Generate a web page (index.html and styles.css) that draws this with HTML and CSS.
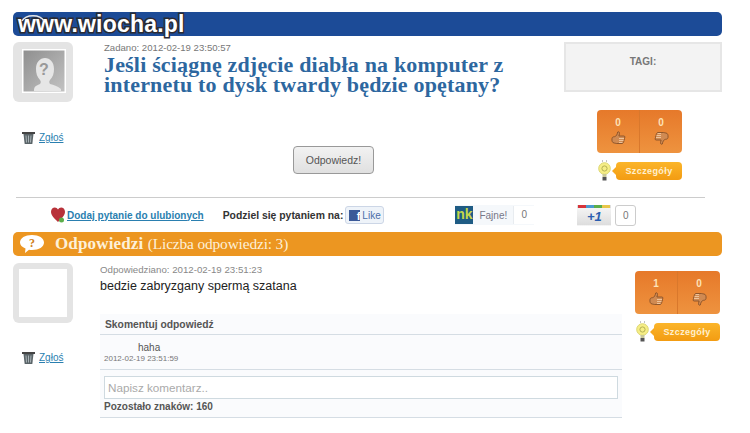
FILE: index.html
```html
<!DOCTYPE html>
<html>
<head>
  <title>Pytanie</title>
  <link rel="stylesheet" href="styles.css">
</head>
<body>
  <svg class="sprites" width="0" height="0">
    <symbol id="trash" viewBox="0 0 13 13">
      <path d="M0 1h13v2H0z" fill="#444"/>
      <path d="M1.500 3h10l-1.200 10H2.700z" fill="#5a6468"/>
      <path d="M4 4.500l.5 7M6.500 4.500v7M9 4.500l-.5 7" stroke="#aab4b8" fill="none"/>
    </symbol>
    <symbol id="up" viewBox="0 0 15 14">
      <path d="M1 7.500c0-1 1-1.800 2.500-1.800 1.800-.4 2.700-2 3.200-4.700.8-.6 2 0 1.800 1.500l-.6 2.500h5c1.400 0 1.400 2 .2 2.200.8.500.6 1.800-.3 2 .5.600.2 1.600-.6 1.800.2.800-.3 1.500-1.200 1.500H5.500c-1 0-1.500-.5-2.300-.5C1.500 12 .6 10 1 7.500z" fill="#d08a52" stroke="#7c4a26" stroke-width=".8"/>
      <path d="M8 7.500h5M8 9.500h4.500M8 11.500h3.500" stroke="#f5d3ae" stroke-width=".8"/>
    </symbol>
    <symbol id="down" viewBox="0 0 15 14">
      <path d="M14 6.500c0 1-1 1.800-2.500 1.800-1.800.4-2.700 2-3.200 4.700-.8.600-2 0-1.800-1.500l.6-2.500h-5c-1.400 0-1.400-2-.2-2.200-.8-.5-.6-1.800.3-2-.5-.6-.2-1.600.6-1.800-.2-.8.3-1.500 1.200-1.500h5.500c1 0 1.500.5 2.300.5 1.700 0 2.600 2 2.200 4.500z" fill="#d08a52" stroke="#7c4a26" stroke-width=".8"/>
      <path d="M7 6.500H2M7 4.500H2.500M7 2.500H3.500" stroke="#f5d3ae" stroke-width=".8"/>
    </symbol>
    <symbol id="bulb" viewBox="0 0 13 21">
      <path d="M4 1h1M8 1h1" stroke="#888"/>
      <circle cx="6.500" cy="8.500" r="5.800" fill="#f6ee86" stroke="#dcd670"/>
      <circle cx="6.500" cy="8.500" r="2.600" fill="none" stroke="#b5b255"/>
      <path d="M4.500 14h4v3h-4z" fill="#c9c89a"/>
      <path d="M4.500 17h4v3.500h-4z" fill="#555"/>
    </symbol>
  </svg>

  <div class="page">
    <svg class="logo-arc" viewBox="0 0 26 10"><path d="M2 9C6 2 20 2 24 9" fill="none" stroke="#e8e8e8" stroke-width="1.500"/></svg>
    <div class="watermark">www.wiocha.pl</div>
    <div class="topbar"></div>

    <div class="question">
      <div class="side">
        <div class="avatar">
          <svg class="photo" viewBox="0 0 44 44">
            <defs>
              <linearGradient id="ph" x1="0" y1="0" x2="1" y2="1">
                <stop offset="0" stop-color="#8d8d8d"/>
                <stop offset="1" stop-color="#c4c4c4"/>
              </linearGradient>
            </defs>
            <rect width="44" height="44" fill="url(#ph)" stroke="#fff" stroke-width="3"/>
            <path d="M12 42c0-4 1-5 6-7 1-1 1-3 0-4-3-3-4-7-4-11 0-7 4-11 9-11s9 4 9 11c0 4-1 8-4 11-1 1-1 3 0 4 4 1 7 2 11 5v2z" fill="#e6e6e6"/>
            <text class="photo-q" x="22" y="26" text-anchor="middle">?</text>
          </svg>
        </div>
        <a class="report report-q" href="#"><svg class="trash"><use href="#trash"/></svg><span>Zgłoś</span></a>
      </div>

      <div class="q-main">
        <div class="meta">Zadano: 2012-02-19 23:50:57</div>
        <h1>Jeśli ściągnę zdjęcie diabła na komputer z internetu to dysk twardy będzie opętany?</h1>
        <button class="reply">Odpowiedz!</button>
      </div>

      <div class="q-aside">
        <div class="tags">TAGI:</div>
        <div class="rating">
          <div class="votes">
            <div class="vote"><b>0</b><svg class="thumb"><use href="#up"/></svg></div>
            <div class="vote"><b>0</b><svg class="thumb"><use href="#down"/></svg></div>
          </div>
          <div class="details">
            <svg class="bulb"><use href="#bulb"/></svg>
            <span class="details-btn">Szczegóły</span>
          </div>
        </div>
      </div>
    </div>

    <div class="share">
      <svg class="heart" viewBox="0 0 14 16">
        <path d="M7 15C3 11 0 8.500 0 4.800 0 2 2 .5 3.800.5 5.200.5 6.300 1.300 7 2.500 7.700 1.300 8.800.5 10.200.5 12 .5 14 2 14 4.800 14 8.500 11 11 7 15z" fill="#b8323a"/>
        <circle cx="10.500" cy="13" r="2.500" fill="#5cae4a"/>
      </svg>
      <a class="fav" href="#">Dodaj pytanie do ulubionych</a>
      <span class="share-label">Podziel się pytaniem na:</span>
      <span class="fb"><i class="fb-logo">f</i>Like</span>
      <span class="nk"><i class="nk-logo">nk</i><span class="nk-text">Fajne!</span><span class="nk-count">0</span></span>
      <span class="plus">+1</span>
      <span class="plus-count">0</span>
    </div>

    <div class="answers-bar">
      <svg class="bubble" viewBox="0 0 24 18">
        <path d="M12 0c7 0 12 3 12 7.500S19 15 12 15c-1 0-2 0-3-.2L5 18l.5-4.500C2 12 0 10 0 7.500 0 3 5 0 12 0z" fill="#fff"/>
        <text class="bubble-q" x="12" y="12" text-anchor="middle">?</text>
      </svg>
      <h2>Odpowiedzi <span>(Liczba odpowiedzi: 3)</span></h2>
    </div>

    <div class="answer">
      <div class="a-side">
        <div class="avatar avatar-blank"><div class="blank"></div></div>
        <a class="report report-a" href="#"><svg class="trash"><use href="#trash"/></svg><span>Zgłoś</span></a>
      </div>

      <div class="a-main">
        <div class="meta a-meta">Odpowiedziano: 2012-02-19 23:51:23</div>
        <p class="a-text">bedzie zabryzgany spermą szatana</p>
        <div class="comments">
          <div class="c-title">Skomentuj odpowiedź</div>
          <div class="comment">
            <div class="c-body">haha</div>
            <div class="c-date">2012-02-19 23:51:59</div>
          </div>
          <div class="c-form">
            <input class="c-input" type="text" placeholder="Napisz komentarz..">
            <div class="c-left">Pozostało znaków: 160</div>
          </div>
        </div>
      </div>

      <div class="a-aside">
        <div class="votes">
          <div class="vote"><b>1</b><svg class="thumb"><use href="#up"/></svg></div>
          <div class="vote"><b>0</b><svg class="thumb"><use href="#down"/></svg></div>
        </div>
        <div class="details">
          <svg class="bulb"><use href="#bulb"/></svg>
          <span class="details-btn">Szczegóły</span>
        </div>
      </div>
    </div>
  </div>
</body>
</html>
```

FILE: styles.css
```css
html, body {
  margin: 0;
  padding: 0;
  background: #fff;
  overflow: hidden;
}
body {
  font-family: "Liberation Sans", Arial, sans-serif;
  color: #333;
}
.sprites {
  position: absolute;
}
.page {
  position: relative;
  width: 709px;
  height: 421px;
  padding: 12px 0 0 13px;
  overflow: hidden;
}
.logo-arc {
  position: absolute;
  left: 20px;
  top: 12px;
  width: 26px;
  height: 10px;
  z-index: 3;
}
.watermark {
  position: absolute;
  left: 18px;
  top: 9px;
  z-index: 2;
  font-size: 23px;
  line-height: 30px;
  font-weight: bold;
  color: #fff;
  -webkit-text-stroke: 3px #2b2b33;
  paint-order: stroke fill;
  letter-spacing: .2px;
}
.topbar {
  height: 24px;
  background: #1c4b97;
  border-radius: 5px;
}

/* question */
.question {
  display: flex;
  margin-top: 6px;
  height: 155px;
}
.side {
  width: 91px;
}
.avatar {
  width: 60px;
  height: 60px;
  box-sizing: border-box;
  padding: 7px 7px 9px 9px;
  background: #e4e4e4;
  border-radius: 6px;
}
.avatar-blank {
  padding: 6px;
}
.photo {
  display: block;
  width: 44px;
  height: 44px;
}
.blank {
  width: 48px;
  height: 48px;
  background: #fff;
}
.photo-q {
  font: bold 16px "Liberation Sans", sans-serif;
  fill: #999;
}
.report {
  display: flex;
  align-items: center;
  gap: 4px;
  margin-left: 9px;
  font-size: 10px;
  color: #2a7fb0;
}
.report-q {
  margin-top: 29px;
}
.trash {
  width: 13px;
  height: 13px;
}
.q-main {
  width: 460px;
  display: flex;
  flex-direction: column;
}
.meta {
  font-size: 9.600px;
  line-height: 12px;
  color: #777;
}
h1 {
  margin: 1px 0 0;
  width: 420px;
  font-family: "Liberation Serif", Georgia, serif;
  font-size: 22px;
  line-height: 20px;
  font-weight: bold;
  color: #2d679f;
  letter-spacing: .18px;
}
.reply {
  align-self: center;
  margin: 51px 1px 0 0;
  width: 81px;
  height: 28px;
  padding: 0;
  font-family: inherit;
  font-size: 10.500px;
  color: #555;
  background: linear-gradient(#f2f2f2, #e0e0e0);
  border: 1px solid #999;
  border-radius: 4px;
}
.q-aside {
  width: 158px;
}
.tags {
  box-sizing: border-box;
  height: 50px;
  padding-top: 11px;
  text-align: center;
  font-size: 10px;
  line-height: 14px;
  font-weight: bold;
  color: #777;
  background: #f3f3f3;
  border: 2px solid #e6e6e6;
}
.rating {
  width: 85px;
  margin: 18px 0 0 33px;
}

/* votes */
.votes {
  display: flex;
  width: 85px;
  height: 43px;
  background: linear-gradient(#e6792a, #ee933f);
  border-radius: 4px;
}
.vote {
  flex: 1;
  display: flex;
  flex-direction: column;
  align-items: center;
  padding-top: 6px;
}
.vote + .vote {
  border-left: 1px solid #d9782c;
}
.vote b {
  font-size: 10px;
  line-height: 13px;
  color: #fde3b8;
}
.thumb {
  width: 15px;
  height: 14px;
  margin-top: 2px;
}
.details {
  display: flex;
  align-items: center;
  justify-content: space-between;
  margin-top: 7px;
  padding-left: 1px;
}
.bulb {
  width: 13px;
  height: 21px;
}
.details-btn {
  position: relative;
  width: 66px;
  height: 18px;
  font-size: 9px;
  line-height: 18px;
  font-weight: bold;
  letter-spacing: .4px;
  text-align: center;
  color: #fff0cf;
  background: linear-gradient(#fbb52a, #f39c12);
  border-radius: 4px;
}
.details-btn::before {
  content: "";
  position: absolute;
  left: -4px;
  top: 5px;
  border-style: solid;
  border-width: 4px 4px 4px 0;
  border-color: transparent #f7a71c transparent transparent;
}

/* share row */
.share {
  display: flex;
  align-items: center;
  height: 22px;
  margin: 0 17px 0 3px;
  padding: 6px 0 0 35px;
  border-top: 1px solid #ccc;
}
.heart {
  width: 14px;
  height: 16px;
}
.fav {
  margin-left: 2px;
  font-size: 10px;
  font-weight: bold;
  color: #2a7fb0;
}
.share-label {
  margin-left: 19px;
  font-size: 10.400px;
  font-weight: bold;
  color: #333;
}
.fb {
  display: flex;
  align-items: center;
  box-sizing: border-box;
  width: 39px;
  height: 18px;
  margin-left: 2px;
  padding-left: 3px;
  font-size: 10px;
  color: #4a6ea9;
  background: #eef3f9;
  border: 1px solid #ccd6e6;
  border-radius: 3px;
}
.fb-logo {
  width: 11px;
  height: 11px;
  margin-right: 2px;
  background: #3b5998;
  color: #fff;
  font: bold 11px/12px "Liberation Sans", sans-serif;
  text-align: right;
  overflow: hidden;
}
.nk {
  display: flex;
  align-items: center;
  height: 20px;
  margin-left: 71px;
  background: #f5f8fb;
}
.nk-logo {
  width: 18px;
  height: 18px;
  background: #1f5c84;
  color: #c5d84a;
  font: bold 14px/17px "Liberation Sans", sans-serif;
  text-align: center;
}
.nk-text {
  width: 40px;
  text-align: center;
  font-size: 10px;
  color: #778;
}
.nk-count {
  width: 20px;
  text-align: center;
  font-size: 10px;
  color: #777;
  background: #fff;
  border-left: 1px solid #e8ecf0;
  line-height: 18px;
}
.plus {
  box-sizing: border-box;
  width: 34px;
  height: 21px;
  margin-left: 43px;
  text-align: center;
  font: italic bold 13px/18px "Liberation Sans", sans-serif;
  color: #2a5db0;
  background: linear-gradient(#f4f4f4, #ddd);
  border: 1px solid #bbb;
  border-top: 3px solid #d9ab3f;
  border-image: linear-gradient(90deg, #d6343a 0 25%, #4a9ad0 25% 50%, #5cae4a 50% 75%, #e8c64a 75%) 3 0 0 0;
  border-bottom: 1px solid #aaa;
}
.plus-count {
  box-sizing: border-box;
  width: 21px;
  height: 21px;
  margin-left: 4px;
  text-align: center;
  font-size: 10px;
  line-height: 19px;
  color: #777;
  border: 1px solid #ccc;
  border-radius: 3px;
}

/* answers */
.answers-bar {
  display: flex;
  align-items: center;
  height: 24px;
  margin-top: 6px;
  padding-left: 7px;
  background: #ec9621;
  border-radius: 5px;
}
.bubble {
  width: 24px;
  height: 18px;
}
.bubble-q {
  font: bold 12px "Liberation Serif", serif;
  fill: #d08020;
}
h2 {
  margin: 0 0 0 11px;
  font-family: "Liberation Serif", Georgia, serif;
  font-size: 17px;
  font-weight: bold;
  letter-spacing: .15px;
  color: #fdf0d8;
}
h2 span {
  font-size: 15.400px;
  font-weight: normal;
  letter-spacing: -.15px;
}
.answer {
  display: flex;
  margin-top: 7px;
}
.a-side {
  width: 87px;
}
.report-a {
  margin-top: 28px;
}
.a-main {
  width: 522px;
}
.a-meta {
  margin-top: 1px;
  font-size: 9.700px;
  color: #888;
}
.a-text {
  margin: 3px 0 0;
  font-size: 12.500px;
  line-height: 14px;
  color: #222;
}
.comments {
  margin-top: 21px;
  background: #fafbfd;
  color: #555;
}
.c-title {
  height: 20px;
  padding-left: 5px;
  font-size: 10.300px;
  font-weight: bold;
  line-height: 22px;
  border-bottom: 1px solid #d5dde4;
}
.comment {
  height: 35px;
  padding: 7px 0 0 4px;
  box-sizing: border-box;
  border-bottom: 1px solid #d5dde4;
}
.c-body {
  padding-left: 34px;
  font-size: 10px;
  line-height: 12px;
}
.c-date {
  font-size: 8px;
  line-height: 10px;
  color: #777;
}
.c-form {
  height: 48px;
  box-sizing: border-box;
  padding: 6px 4px 0;
  border-bottom: 1px solid #d5dde4;
}
.c-input {
  display: block;
  box-sizing: border-box;
  width: 514px;
  height: 23px;
  padding: 0 3px;
  font-family: inherit;
  font-size: 11.700px;
  background: #fff;
  border: 1px solid #cfdae0;
}
.c-input::placeholder {
  color: #aaa;
}
.c-left {
  margin-top: 2px;
  font-size: 10px;
  line-height: 12px;
  font-weight: bold;
}
.a-aside {
  width: 85px;
  margin: 8px 0 0 13px;
}
```
